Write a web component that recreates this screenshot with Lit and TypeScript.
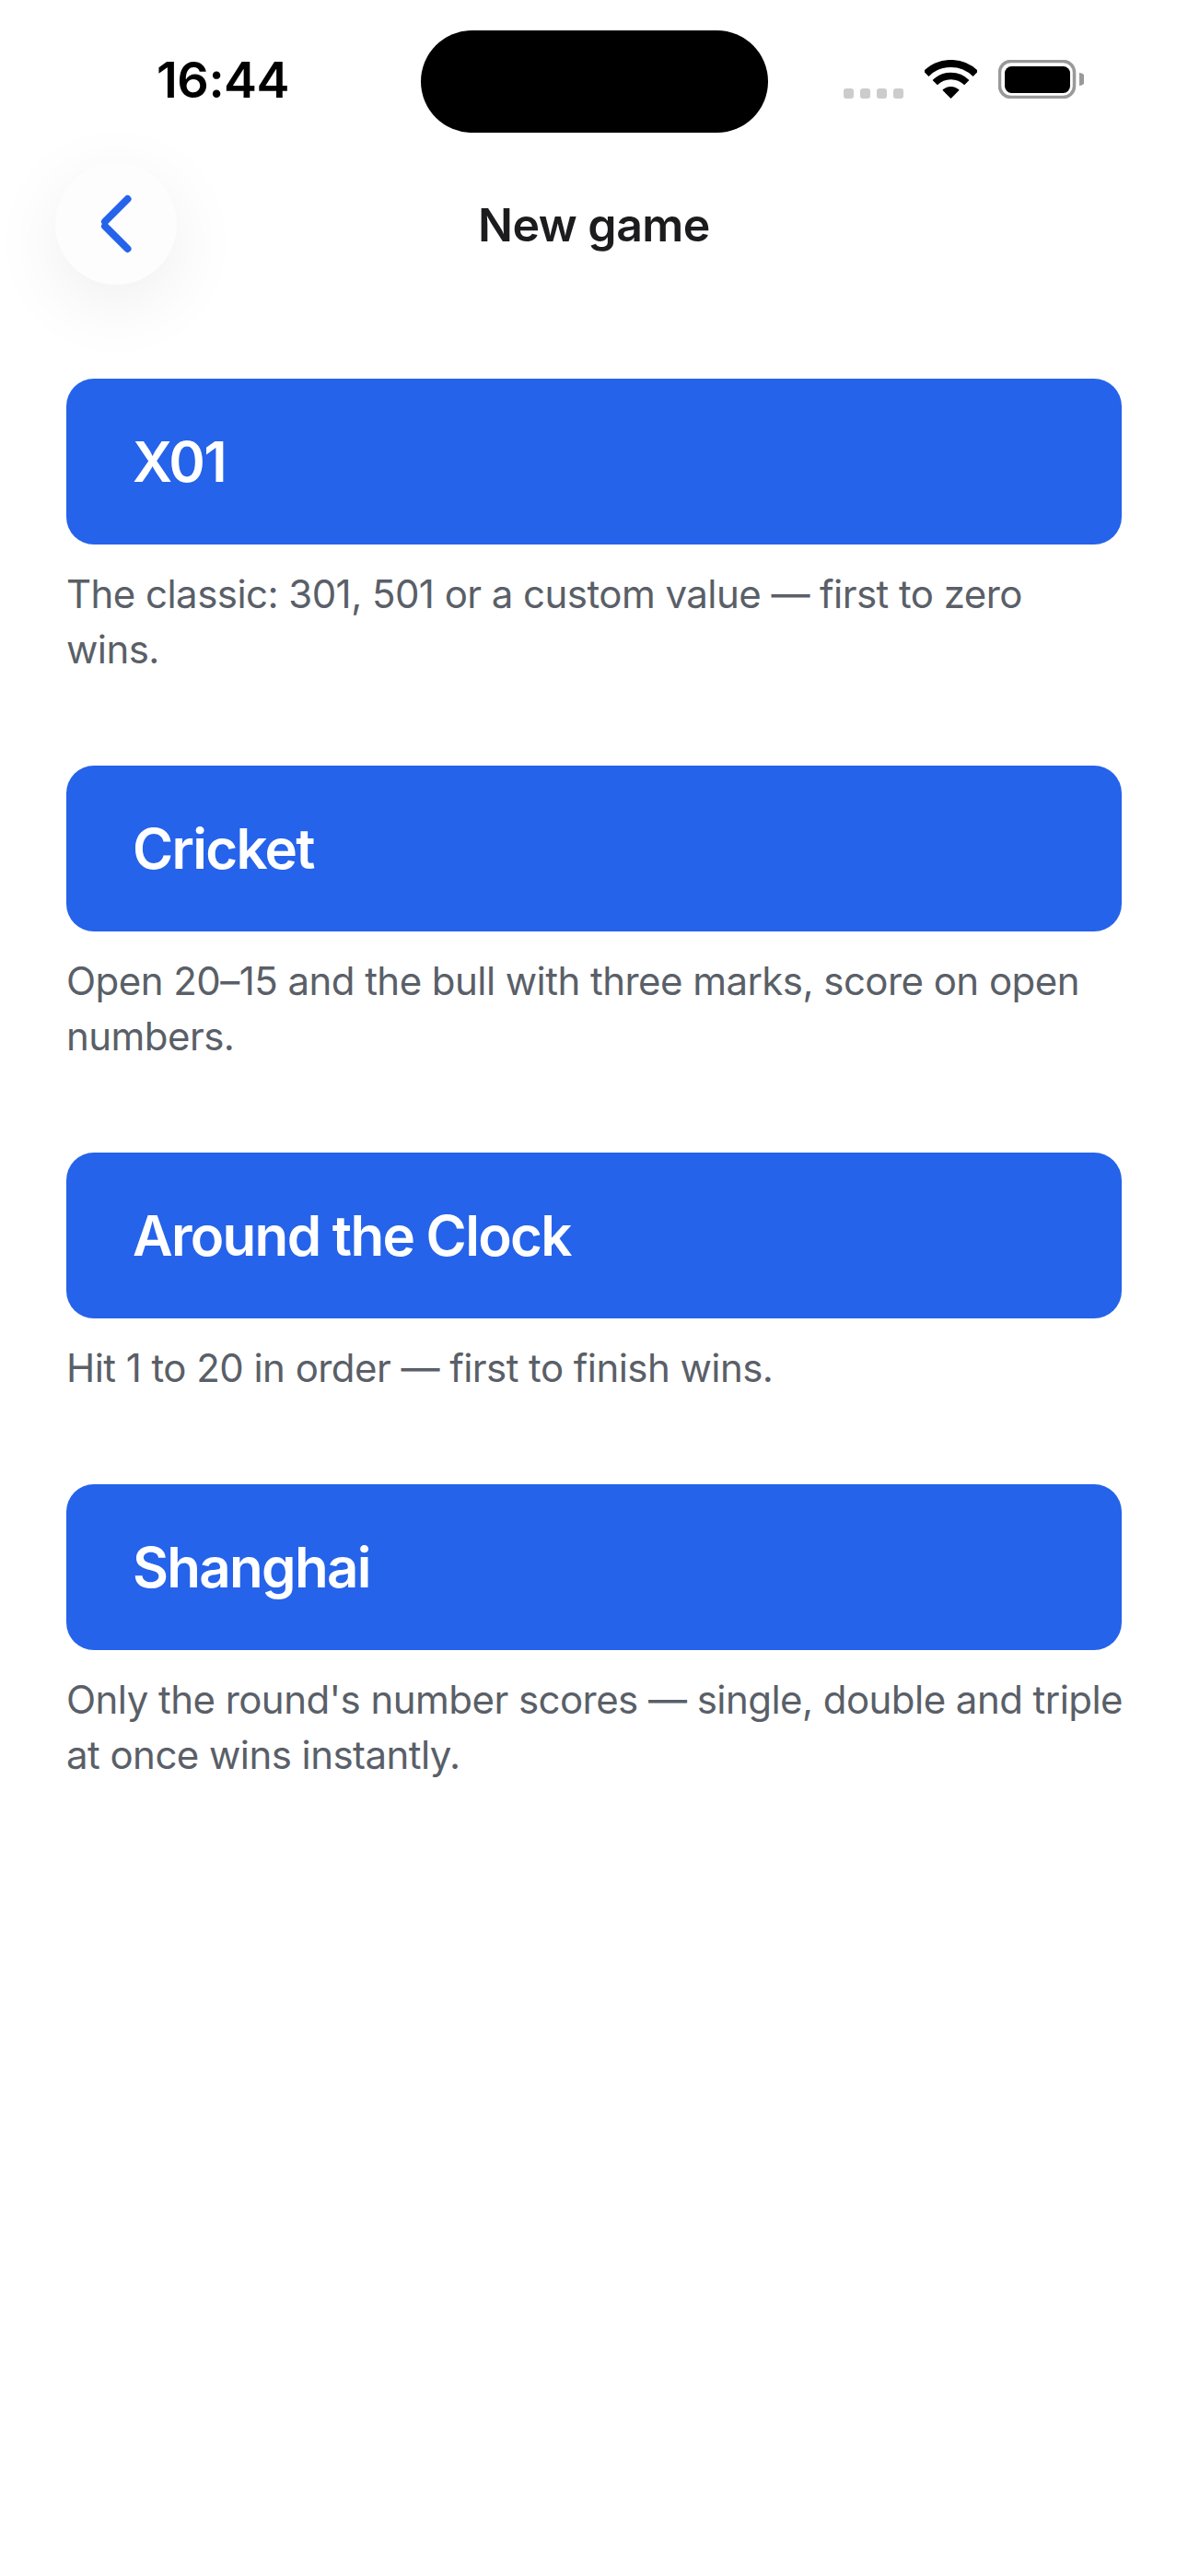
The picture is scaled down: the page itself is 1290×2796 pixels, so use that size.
import { LitElement, html, css } from 'lit';
import { customElement } from 'lit/decorators.js';

const games = [
  { name: 'X01', text: 'The classic: 301, 501 or a custom value — first to zero\nwins.' },
  { name: 'Cricket', text: 'Open 20–15 and the bull with three marks, score on open\nnumbers.' },
  { name: 'Around the Clock', text: 'Hit 1 to 20 in order — first to finish wins.' },
  { name: 'Shanghai', text: "Only the round's number scores — single, double and triple\nat once wins instantly." }
];

@customElement('app-root')
export class AppRoot extends LitElement {
  static styles = css`
    :host {
      display: block;
      width: 1290px;
      min-height: 2796px;
      background: #ffffff;
      font-family: Inter, 'Liberation Sans', sans-serif;
      overflow: hidden;
    }

    .status {
      display: flex;
      height: 144px;
      padding-top: 33px;
      box-sizing: border-box;
    }

    .status__left {
      width: 457px;
      box-sizing: border-box;
      padding: 22px 0 0 170px;
      font-size: 54px;
      line-height: 64px;
      font-weight: 600;
      color: #000000;
      letter-spacing: -0.5px;
    }

    .island {
      width: 377px;
      height: 111px;
      border-radius: 56px;
      background: #000000;
    }

    .status__right {
      display: flex;
      align-items: flex-end;
      height: 74px;
      padding-left: 82px;
    }

    .dots {
      display: flex;
      gap: 7px;
      margin-right: 23px;
    }

    .dots span {
      width: 11px;
      height: 11px;
      border-radius: 3px;
      background: #cccccc;
    }

    .wifi {
      display: block;
      margin-right: 23px;
    }

    .battery {
      display: block;
    }

    .nav {
      display: grid;
      grid-template-columns: 1fr auto 1fr;
      align-items: center;
      margin-top: 33px;
      padding-left: 60px;
      padding-right: 60px;
    }

    .back {
      display: flex;
      align-items: center;
      justify-content: center;
      width: 132px;
      height: 132px;
      border-radius: 50%;
      background: #fdfdfd;
      box-shadow: 0 20px 80px rgba(0, 0, 0, 0.07);
    }

    .title {
      padding-top: 2px;
      font-size: 50px;
      line-height: 60px;
      font-weight: 600;
      color: #1c1c1e;
      letter-spacing: -0.5px;
    }

    .list {
      display: flex;
      flex-direction: column;
      gap: 96px;
      margin-top: 102px;
      padding: 0 72px;
    }

    .card {
      display: flex;
      align-items: center;
      height: 180px;
      padding: 0 72px;
      border-radius: 30px;
      background: #2563eb;
      color: #ffffff;
      font-size: 60px;
      font-weight: 600;
      letter-spacing: -1.7px;
    }

    .desc {
      margin: 24px 0 0;
      font-size: 42px;
      line-height: 60px;
      color: #5a5f68;
      letter-spacing: -0.55px;
      white-space: pre;
    }
  `;

  render() {
    return html`
      <div class="status">
        <div class="status__left">16:44</div>
        <div class="island"></div>
        <div class="status__right">
          <div class="dots"><span></span><span></span><span></span><span></span></div>
          <svg class="wifi" width="57" height="42" viewBox="0 0 57 42">
            <path d="M1.6 15.1A38 38 0 0 1 55.4 15.1" fill="none" stroke="#000" stroke-width="8" />
            <path d="M11.2 24.7A24.5 24.5 0 0 1 45.8 24.7" fill="none" stroke="#000" stroke-width="7.5" />
            <path d="M28.5 42L19.3 32.8A13 13 0 0 1 37.7 32.8Z" fill="#000" />
          </svg>
          <svg class="battery" width="93" height="42" viewBox="0 0 93 42">
            <rect x="1.5" y="1.5" width="81" height="39" rx="12" fill="none" stroke="#999" stroke-width="3.5" />
            <rect x="7" y="7" width="71" height="29" rx="7.5" fill="#000" />
            <path d="M88 14a7 7 0 0 1 0 14Z" fill="#999" />
          </svg>
        </div>
      </div>
      <div class="nav">
        <div class="back">
          <svg width="132" height="132" viewBox="0 0 132 132">
            <path d="M78.5 39L54 63.500M54 68.500L78.500 93" fill="none" stroke="#2563eb" stroke-width="8" stroke-linecap="round" />
          </svg>
        </div>
        <div class="title">New game</div>
      </div>
      <div class="list">
        ${games.map(
          (game) => html`
            <div>
              <div class="card">${game.name}</div>
              <p class="desc">${game.text}</p>
            </div>
          `
        )}
      </div>
    `;
  }
}
